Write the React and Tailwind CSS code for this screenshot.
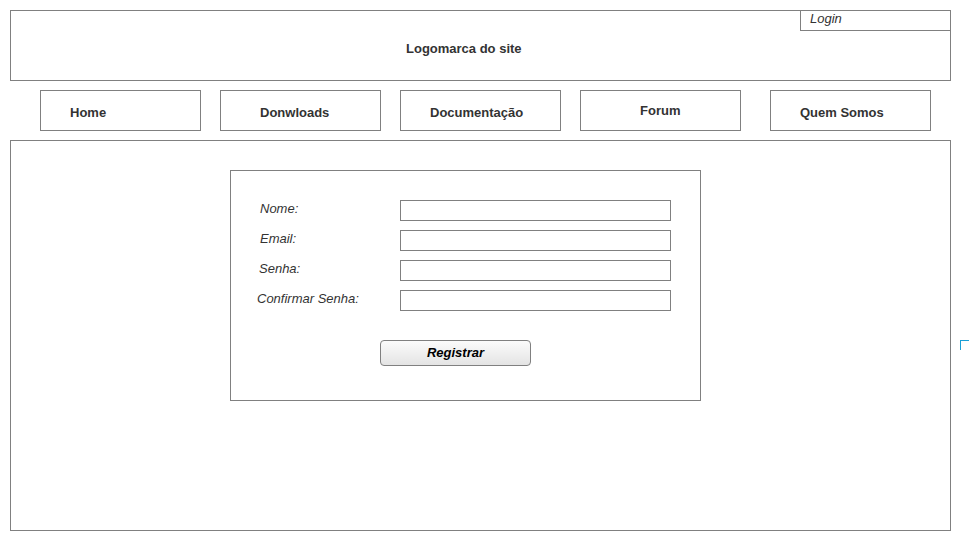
const navItems = [
  { label: "Home", cls: "pl-[29px] pt-[4px]", ml: "ml-[30px]" },
  { label: "Donwloads", cls: "pl-[39px] pt-[4px]", ml: "ml-[19px]" },
  { label: "Documentação", cls: "pl-[29px] pt-[4px]", ml: "ml-[19px]" },
  { label: "Forum", cls: "pl-[59px]", ml: "ml-[19px]" },
  { label: "Quem Somos", cls: "pl-[29px] pt-[4px]", ml: "ml-[29px]" },
];

const fields = [
  { label: "Nome:", pl: "pl-[29px]" },
  { label: "Email:", pl: "pl-[29px]" },
  { label: "Senha:", pl: "pl-[28px]" },
  { label: "Confirmar Senha:", pl: "pl-[26px]" },
];

export default function App() {
  return (
    <div
      className="relative w-[978px] h-[538px] bg-white text-[#333] pt-[10px] pl-[10px]"
      style={{ fontFamily: '"Liberation Sans", Arial, sans-serif' }}
    >
      {/* header */}
      <div className="relative w-[941px] h-[71px] border border-[#808080] flex items-center pl-[395px] pt-[6px]">
        <span className="text-[13px] font-bold">Logomarca do site</span>
        <div className="absolute top-[-1px] right-[-1px] w-[151px] h-[21px] border border-[#808080] pl-[9px] text-[13px] italic leading-[15px]">
          Login
        </div>
      </div>

      {/* nav */}
      <div className="flex mt-[9px]">
        {navItems.map((item) => (
          <div
            key={item.label}
            className={`${item.ml} w-[161px] h-[41px] border border-[#808080] flex items-center text-[13px] font-bold ${item.cls}`}
          >
            {item.label}
          </div>
        ))}
      </div>

      {/* content */}
      <div className="mt-[9px] w-[941px] h-[391px] border border-[#808080] pt-[29px] pl-[219px]">
        <div className="w-[471px] h-[231px] border border-[#808080] pt-[29px]">
          {fields.map((f) => (
            <div key={f.label} className="flex items-center h-[21px] mb-[9px]">
              <div className={`w-[169px] text-[13px] italic ${f.pl} pb-[3px]`}>{f.label}</div>
              <div className="w-[271px] h-[21px] border border-[#808080] bg-white" />
            </div>
          ))}
          <div className="mt-[29px] ml-[149px]">
            <button className="w-[151px] h-[26px] rounded-[4px] border border-[#808080] bg-gradient-to-b from-[#fbfbfb] to-[#e4e4e4] text-[13px] font-bold italic text-black">
              Registrar
            </button>
          </div>
        </div>
      </div>

      {/* selection corner */}
      <div className="absolute left-[960px] top-[340px] w-[9px] h-[10px] border-l border-t border-[#1a9fd6]" />
    </div>
  );
}
